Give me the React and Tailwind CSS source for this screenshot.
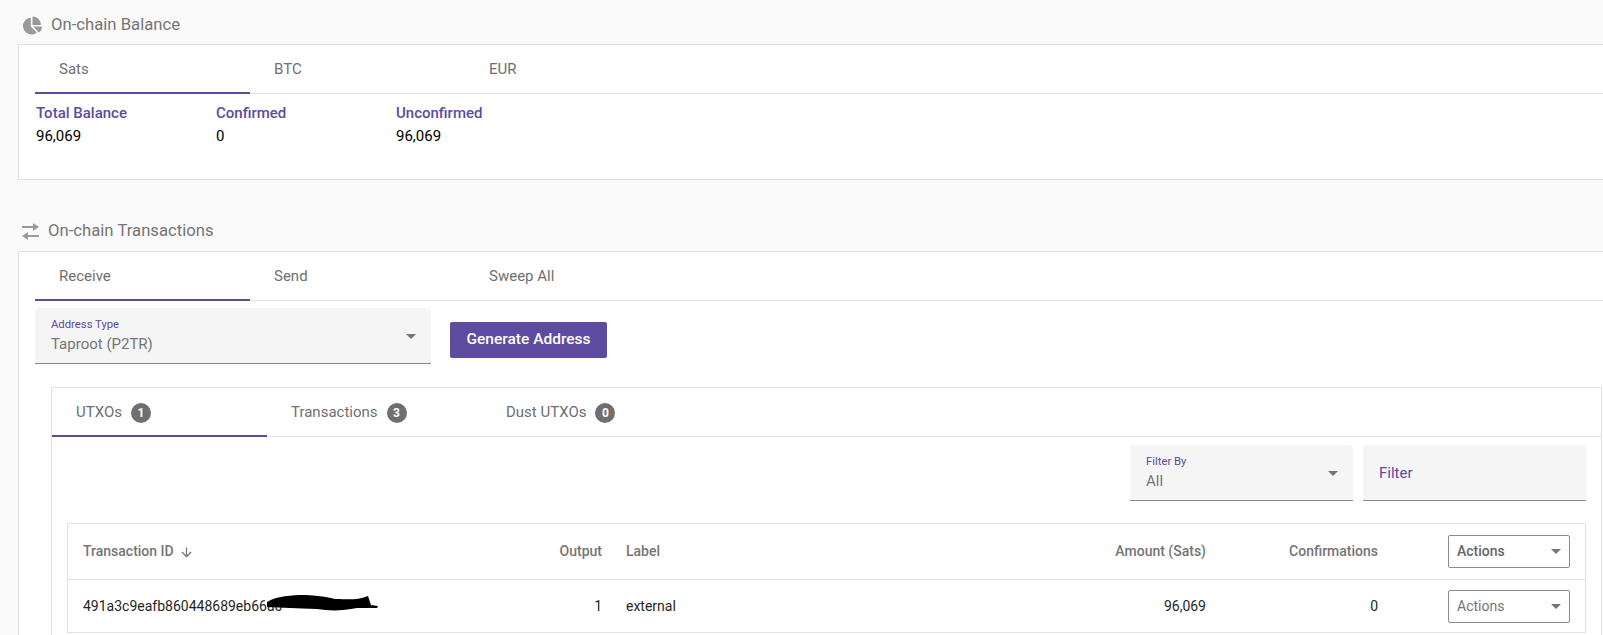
import { FaChartPie } from 'react-icons/fa';
import { MdArrowDownward } from 'react-icons/md';

function Caret({ className = '' }) {
    return <span className={`block w-0 h-0 border-x-[5px] border-x-transparent border-t-[5px] border-t-[#757575] ${className}`} />;
}

function SwapIcon() {
    return (
        <svg className="text-[#9a9a9a]" width="17" height="17" viewBox="0 0 17 17" fill="currentColor">
            <path d="M0 3H11V0L17 4L11 8V5H0Z" />
            <path d="M17 12H6V9L0 13L6 17V14H17Z" />
        </svg>
    );
}

function Tabs({ items, active = 0 }) {
    return (
        <div className="flex border-b border-[#e0e0e0]">
            {items.map((item, i) => (
                <div
                    key={item.label}
                    className={`w-[215px] h-[49px] -mb-px pt-[2px] border-b-2 flex items-center pl-6 gap-[9px] text-[#6f6f6f] text-[15px] ${i === active ? 'border-[#5c4b9f]' : 'border-transparent'}`}
                >
                    {item.label}
                    {item.count !== undefined && (
                        <span className="w-[20px] h-[20px] rounded-full bg-[#6f6f6f] text-white text-[12px] font-bold flex items-center justify-center">
                            {item.count}
                        </span>
                    )}
                </div>
            ))}
        </div>
    );
}

function Stat({ label, value }) {
    return (
        <div className="w-[180px]">
            <div className="text-[#5c4b9f] text-[15px] font-medium leading-[20px]">{label}</div>
            <div className="text-black text-[15px] leading-[20px] mt-[3px]">{value}</div>
        </div>
    );
}

function FilledSelect({ label, value, className = '' }) {
    return (
        <div className={`relative bg-[#f5f5f5] rounded-t border-b border-[#8c8c8c] pl-4 pt-[10px] ${className}`}>
            <div className="text-[#5c4b9f] text-[11.3px] leading-[13px]">{label}</div>
            <div className="text-[#757575] text-[15px] leading-[20px] mt-[3px]">{value}</div>
            <Caret className="absolute right-[15px] top-[26px]" />
        </div>
    );
}

function ActionsSelect({ bold }) {
    return (
        <div className={`w-[122px] h-[33px] rounded-[2px] border border-[#8c8c8c] bg-white flex items-center justify-between pl-[8px] pr-[8px] text-[14px] ${bold ? 'font-medium text-[#666]' : 'text-[#757575]'}`}>
            Actions
            <Caret />
        </div>
    );
}

const rowCols = 'grid grid-cols-[300px_219px_399px_205px_172px_192px] items-center pl-[15px] text-[14px]';

export default function App() {
    return (
        <div className="h-[635px] w-[1603px] overflow-hidden bg-[#fafafa] font-['Roboto',sans-serif]">
            <div className="w-[1620px] pl-[18px]">
                <div className="h-[44px] pt-[6px] flex items-center pl-[5px] gap-[9px] text-[#757575] text-[16.7px]">
                    <FaChartPie className="w-[19px] h-[19px] text-[#9a9a9a]" />
                    On-chain Balance
                </div>
                <div className="h-[136px] bg-white border border-[#e0e0e0] pl-4">
                    <Tabs items={[{ label: 'Sats' }, { label: 'BTC' }, { label: 'EUR' }]} />
                    <div className="flex pt-[9px] pl-[1px]">
                        <Stat label="Total Balance" value="96,069" />
                        <Stat label="Confirmed" value="0" />
                        <Stat label="Unconfirmed" value="96,069" />
                    </div>
                </div>

                <div className="h-[71px] pt-[31px] flex items-center pl-[4px] gap-[9px] text-[#757575] text-[16.7px]">
                    <SwapIcon />
                    On-chain Transactions
                </div>
                <div className="bg-white border border-[#e0e0e0] pl-4 pb-10">
                    <Tabs items={[{ label: 'Receive' }, { label: 'Send' }, { label: 'Sweep All' }]} />
                    <div className="flex items-center gap-[19px] mt-[7px]">
                        <FilledSelect label="Address Type" value="Taproot (P2TR)" className="w-[396px] h-[56px]" />
                        <button className="w-[157px] h-[36px] mt-[8px] rounded-[2px] bg-[#5c4b9f] text-white text-[15.5px] font-medium">
                            Generate Address
                        </button>
                    </div>

                    <div className="ml-4 mr-[15px] mt-[23px] w-[1551px] bg-white border border-[#e0e0e0] pb-6">
                        <Tabs
                            items={[
                                { label: 'UTXOs', count: 1 },
                                { label: 'Transactions', count: 3 },
                                { label: 'Dust UTXOs', count: 0 },
                            ]}
                        />
                        <div className="flex justify-end gap-[10px] mt-[8px] mr-[15px]">
                            <FilledSelect label="Filter By" value="All" className="w-[223px] h-[56px]" />
                            <div className="w-[223px] h-[56px] pt-[2px] bg-[#f5f5f5] rounded-t border-b border-[#8c8c8c] pl-4 flex items-center text-[#5c4b9f] text-[15px]">
                                Filter
                            </div>
                        </div>

                        <div className="mx-[15px] mt-[22px] border border-[#e0e0e0]">
                            <div className={`${rowCols} h-[56px] border-b border-[#e0e0e0] font-medium text-[#757575]`}>
                                <div className="flex items-center gap-[5px]">
                                    Transaction ID
                                    <MdArrowDownward className="w-[15px] h-[15px] mt-[2px]" />
                                </div>
                                <div className="text-right">Output</div>
                                <div className="pl-6">Label</div>
                                <div className="text-right">Amount (Sats)</div>
                                <div className="text-right">Confirmations</div>
                                <div className="flex justify-end"><ActionsSelect bold /></div>
                            </div>
                            <div className={`${rowCols} h-[52px] text-[#1f1f1f]`}>
                                <div className="relative whitespace-nowrap">
                                    491a3c9eafb860448689eb66a0
                                    <svg className="absolute left-[184px] top-[-3px]" width="112" height="20" viewBox="0 0 112 20">
                                        <path d="M0 9 C10 3 20 3 32 2 C48 2 60 4 68 6 C80 6 88 7 95 5 L101 3 L104 12 L111 13 L110 15 L90 15 C75 18 62 18 50 16 C30 15 15 15 0 14 Z" fill="#000" />
                                    </svg>
                                </div>
                                <div className="text-right">1</div>
                                <div className="pl-6">external</div>
                                <div className="text-right">96,069</div>
                                <div className="text-right">0</div>
                                <div className="flex justify-end"><ActionsSelect /></div>
                            </div>
                        </div>
                    </div>
                </div>
            </div>
        </div>
    );
}
